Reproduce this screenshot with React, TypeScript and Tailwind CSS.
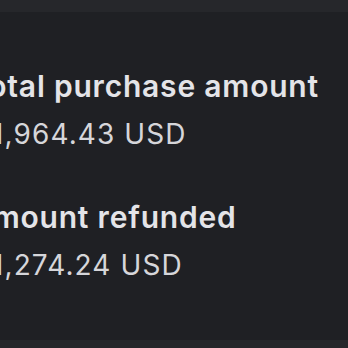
import React from "react";

const stats = [
  { label: "Total purchase amount", value: "1,964.43 USD" },
  { label: "Amount refunded", value: "1,274.24 USD" },
];

const App = () => {
  return (
    <div className="w-[348px] h-[348px] overflow-hidden bg-[#1f2024] flex flex-col" style={{ fontFamily: "Inter, 'Noto Sans', sans-serif" }}>
      <div className="h-[12px] bg-[#26272b] shrink-0" />
      <div className="flex flex-col gap-[47px] pt-[56px]">
        {stats.map((s) => (
          <div key={s.label} className="flex flex-col gap-[12px]">
            <p className="ml-[-30px] text-[30px] leading-[36px] tracking-[0.8px] font-semibold text-[#e4e4e8] whitespace-nowrap">{s.label}</p>
            <p className="ml-[-8px] text-[28px] leading-[36px] tracking-[1.1px] text-[#d6d6da] whitespace-nowrap">{s.value}</p>
          </div>
        ))}
      </div>
      <div className="mt-auto h-[8px] bg-[#26272b] shrink-0" />
    </div>
  );
};

export default App;
